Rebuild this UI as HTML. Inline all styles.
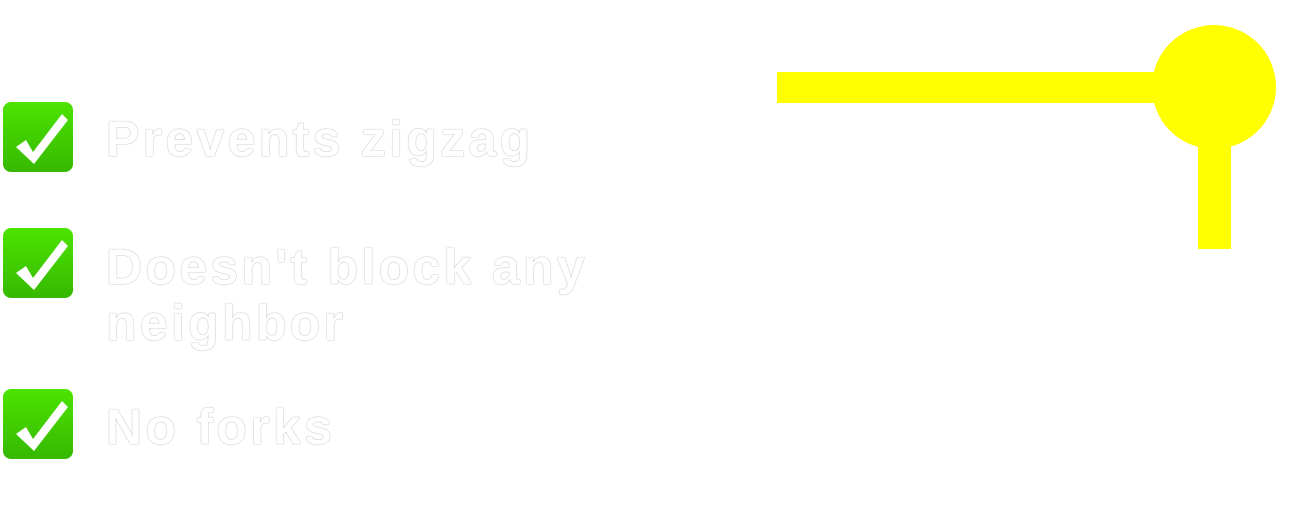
<!DOCTYPE html>
<html><head><style>
html,body{margin:0;padding:0;background:#fff;width:1314px;height:512px;overflow:hidden;position:relative}
.cb{position:absolute;left:3px;width:70px;height:70px;border-radius:8px;background:linear-gradient(#4ce400,#36b800)}
.cb svg{position:absolute;left:0;top:0}
.t{position:absolute;left:106px;font:bold 50px "Liberation Sans",sans-serif;color:#fff;letter-spacing:3.3px;line-height:56px;
text-shadow:0 0 1px #aaa,0 0 1px #aaa}
.y{position:absolute;background:#ffff00}
</style></head><body>
<div class="cb" style="top:102px"><svg width="70" height="70"><path d="M13 45 L23 38 L30 50 L59 12 L65 18 L31 62 Z" fill="#fff"/></svg></div>
<div class="cb" style="top:228px"><svg width="70" height="70"><path d="M13 45 L23 38 L30 50 L59 12 L65 18 L31 62 Z" fill="#fff"/></svg></div>
<div class="cb" style="top:389px"><svg width="70" height="70"><path d="M13 45 L23 38 L30 50 L59 12 L65 18 L31 62 Z" fill="#fff"/></svg></div>
<div class="t" style="top:111px">Prevents zigzag</div>
<div class="t" style="top:239px">Doesn't block any<br>neighbor</div>
<div class="t" style="top:399px">No forks</div>
<div class="y" style="left:777px;top:72px;width:400px;height:31px"></div>
<div class="y" style="left:1152px;top:25px;width:124px;height:124px;border-radius:50%"></div>
<div class="y" style="left:1198px;top:120px;width:33px;height:129px"></div>
</body></html>
